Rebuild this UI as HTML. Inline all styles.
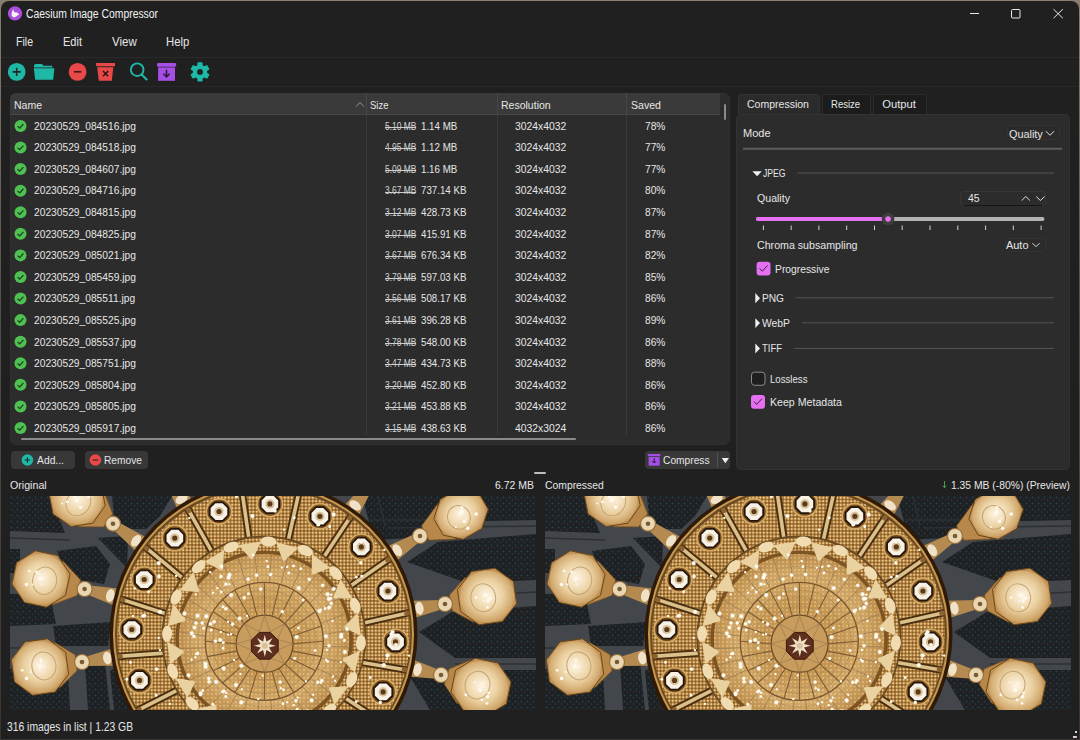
<!DOCTYPE html>
<html><head><meta charset="utf-8">
<style>
*{margin:0;padding:0;box-sizing:border-box}
html,body{width:1080px;height:740px;overflow:hidden;background:#202020}
body{position:relative;font-family:"Liberation Sans",sans-serif;color:#e6e6e6;font-size:11px}
.a{position:absolute}
.t{position:absolute;white-space:nowrap;line-height:1;transform-origin:0 0}
svg{position:absolute;overflow:visible}
</style></head><body>
<div class="a" style="left:0px;top:0px;width:1080px;height:740px;background:linear-gradient(#8a7e6e,#55504a 40%,#3a3430);"></div>
<div class="a" style="left:1px;top:1px;width:1078px;height:738px;background:#202020;border-radius:8px 8px 0 0"></div>
<div class="a" style="left:1075px;top:731px;width:2px;height:2px;background:#d8d8d8;"></div>
<div class="a" style="left:1073px;top:736px;width:2px;height:2px;background:#d8d8d8;"></div>
<div class="a" style="left:1075px;top:736px;width:2px;height:2px;background:#c8c0c8;"></div>
<svg style="left:0;top:0" width="40" height="28" viewBox="0 0 40 28">
<circle cx="15" cy="13.4" r="7.1" fill="#a94fdc"/>
<path d="M13.2 9.2 L14.3 12.2 L17.2 12.6 L19.2 14.6 L17.3 15.6 L16 16.8 L13.2 17.4 L11.6 15.2 L11.8 12.6 Z" fill="#f6f2f0"/>
</svg>
<div class="t" style="left:26.00px;top:7.84px;font-size:12px;transform:scaleX(0.8644);color:#f2f2f2;">Caesium Image Compressor</div>
<svg style="left:960px;top:0" width="120" height="28" viewBox="960 0 120 28">
<line x1="970" y1="13.5" x2="979" y2="13.5" stroke="#e8e8e8" stroke-width="1"/>
<rect x="1011.5" y="9.5" width="8.5" height="8.5" rx="1" fill="none" stroke="#e8e8e8" stroke-width="1"/>
<path d="M1053.5 9.2 L1062.8 18.2 M1062.8 9.2 L1053.5 18.2" stroke="#e8e8e8" stroke-width="1"/>
</svg>
<div class="t" style="left:16.30px;top:35.69px;font-size:12.3px;transform:scaleX(0.8578);">File</div>
<div class="t" style="left:63.00px;top:35.69px;font-size:12.3px;transform:scaleX(0.8965);">Edit</div>
<div class="t" style="left:112.00px;top:35.69px;font-size:12.3px;transform:scaleX(0.9343);">View</div>
<div class="t" style="left:165.70px;top:35.69px;font-size:12.3px;transform:scaleX(0.9211);">Help</div>
<div class="a" style="left:1px;top:57px;width:1078px;height:1px;background:#2a2a2a;"></div>
<div class="a" style="left:1px;top:86px;width:1078px;height:1px;background:#292929;"></div>
<svg style="left:0;top:56px" width="220" height="32" viewBox="0 56 220 32">
<circle cx="16.7" cy="71.9" r="8.9" fill="#1eb8a6"/>
<path d="M12.6 71.9 H20.8 M16.7 67.8 V76" stroke="#1c2b2a" stroke-width="1.6"/>
<path d="M35.5 64 L42 64 L43.5 65.8 L52.3 65.8 L52.3 67.6 L34 67.6 L34 65 Z" fill="#1eb8a6"/>
<path d="M33.8 68.2 L54.4 68.2 L53.2 79.7 L35.2 79.7 Z" fill="#1eb8a6"/>
<circle cx="77.6" cy="71.9" r="8.9" fill="#e84848"/>
<path d="M74 71.8 H81.4" stroke="#3a1c1c" stroke-width="1.6"/>
<rect x="96.1" y="63" width="18.9" height="3.3" fill="#e84848"/>
<path d="M97.2 67.3 L113.3 67.3 L111.8 80.8 L98.8 80.8 Z" fill="#e84848"/>
<path d="M103 71 L108.2 76.2 M108.2 71 L103 76.2" stroke="#2a1414" stroke-width="1.5"/>
<circle cx="137.2" cy="69.7" r="6.3" fill="none" stroke="#1eb8a6" stroke-width="1.9"/>
<path d="M141.6 74.4 L147.2 80" stroke="#1eb8a6" stroke-width="2.1"/>
<rect x="157" y="63" width="19.1" height="3.7" rx="1.2" fill="#a64fe6"/>
<rect x="158.1" y="67.4" width="16.9" height="13.4" fill="#a64fe6"/>
<path d="M166.5 69.7 V76.8 M163.4 73.8 L166.5 76.9 L169.6 73.8" fill="none" stroke="#2a1a36" stroke-width="1.5"/>
<g transform="translate(200 71.9)" fill="#1eb8a6">
<circle r="7.2"/>
<g id="tooth"><rect x="-2.6" y="-9.6" width="5.2" height="4" rx="0.8"/></g>
<use href="#tooth" transform="rotate(60)"/><use href="#tooth" transform="rotate(120)"/>
<use href="#tooth" transform="rotate(180)"/><use href="#tooth" transform="rotate(240)"/><use href="#tooth" transform="rotate(300)"/>
<circle r="2.9" fill="#202020"/>
</g>
</svg>
<div class="a" style="left:10px;top:93px;width:720px;height:351.7px;background:#2c2c2c;border-radius:6px;border:1px solid #303030"></div>
<div class="a" style="left:10px;top:93px;width:710px;height:22px;background:#3a3a3a;border-radius:6px 0 0 0"></div>
<div class="a" style="left:10px;top:114px;width:710px;height:1px;background:#464646;"></div>
<div class="a" style="left:366px;top:93px;width:1px;height:22px;background:#474747;"></div>
<div class="a" style="left:366px;top:115px;width:1px;height:320px;background:#3a3a3a;"></div>
<div class="a" style="left:497px;top:93px;width:1px;height:22px;background:#474747;"></div>
<div class="a" style="left:497px;top:115px;width:1px;height:320px;background:#3a3a3a;"></div>
<div class="a" style="left:626px;top:93px;width:1px;height:22px;background:#474747;"></div>
<div class="a" style="left:626px;top:115px;width:1px;height:320px;background:#3a3a3a;"></div>
<svg style="left:350px;top:95px" width="20" height="18" viewBox="350 95 20 18">
<path d="M356 106.5 L360 102.5 L364 106.5" fill="none" stroke="#9a9a9a" stroke-width="1"/></svg>
<div class="t" style="left:14.00px;top:100.22px;font-size:11.2px;transform:scaleX(0.9406);">Name</div>
<div class="t" style="left:370.20px;top:100.22px;font-size:11.2px;transform:scaleX(0.8491);">Size</div>
<div class="t" style="left:500.70px;top:100.22px;font-size:11.2px;transform:scaleX(0.9392);">Resolution</div>
<div class="t" style="left:630.80px;top:100.22px;font-size:11.2px;transform:scaleX(0.9447);">Saved</div>
<div class="a" style="left:724.2px;top:104px;width:1.7px;height:16px;background:#8a8a8a;border-radius:1px"></div>
<div class="a" style="left:21px;top:438.2px;width:555px;height:1.8px;background:#8a8a8a;border-radius:1px"></div>
<div class="t" style="left:33.50px;top:120.72px;font-size:11.2px;transform:scaleX(0.9150);">20230529_084516.jpg</div>
<div class="t" style="left:384.70px;top:121.73px;font-size:10px;transform:scaleX(0.8432);color:#d4d4d4;">5.10 MB</div>
<div class="a" style="left:384.7px;top:126.8px;width:31.6px;height:0.9px;background:#cfcfcf;"></div>
<div class="t" style="left:420.60px;top:120.72px;font-size:11.2px;transform:scaleX(0.8700);">1.14 MB</div>
<div class="t" style="left:514.90px;top:120.72px;font-size:11.2px;transform:scaleX(0.9256);">3024x4032</div>
<div class="t" style="left:645.00px;top:120.72px;font-size:11.2px;transform:scaleX(0.9101);">78%</div>
<div class="t" style="left:33.50px;top:142.30px;font-size:11.2px;transform:scaleX(0.9150);">20230529_084518.jpg</div>
<div class="t" style="left:384.70px;top:143.31px;font-size:10px;transform:scaleX(0.8432);color:#d4d4d4;">4.95 MB</div>
<div class="a" style="left:384.7px;top:148.38px;width:31.6px;height:0.9px;background:#cfcfcf;"></div>
<div class="t" style="left:420.60px;top:142.30px;font-size:11.2px;transform:scaleX(0.8700);">1.12 MB</div>
<div class="t" style="left:514.90px;top:142.30px;font-size:11.2px;transform:scaleX(0.9256);">3024x4032</div>
<div class="t" style="left:645.00px;top:142.30px;font-size:11.2px;transform:scaleX(0.9101);">77%</div>
<div class="t" style="left:33.50px;top:163.88px;font-size:11.2px;transform:scaleX(0.9150);">20230529_084607.jpg</div>
<div class="t" style="left:384.70px;top:164.89px;font-size:10px;transform:scaleX(0.8432);color:#d4d4d4;">5.09 MB</div>
<div class="a" style="left:384.7px;top:169.96px;width:31.6px;height:0.9px;background:#cfcfcf;"></div>
<div class="t" style="left:420.60px;top:163.88px;font-size:11.2px;transform:scaleX(0.8700);">1.16 MB</div>
<div class="t" style="left:514.90px;top:163.88px;font-size:11.2px;transform:scaleX(0.9256);">3024x4032</div>
<div class="t" style="left:645.00px;top:163.88px;font-size:11.2px;transform:scaleX(0.9101);">77%</div>
<div class="t" style="left:33.50px;top:185.46px;font-size:11.2px;transform:scaleX(0.9150);">20230529_084716.jpg</div>
<div class="t" style="left:384.70px;top:186.47px;font-size:10px;transform:scaleX(0.8432);color:#d4d4d4;">3.67 MB</div>
<div class="a" style="left:384.7px;top:191.54px;width:31.6px;height:0.9px;background:#cfcfcf;"></div>
<div class="t" style="left:420.60px;top:185.46px;font-size:11.2px;transform:scaleX(0.8700);">737.14 KB</div>
<div class="t" style="left:514.90px;top:185.46px;font-size:11.2px;transform:scaleX(0.9256);">3024x4032</div>
<div class="t" style="left:645.00px;top:185.46px;font-size:11.2px;transform:scaleX(0.9101);">80%</div>
<div class="t" style="left:33.50px;top:207.04px;font-size:11.2px;transform:scaleX(0.9150);">20230529_084815.jpg</div>
<div class="t" style="left:384.70px;top:208.05px;font-size:10px;transform:scaleX(0.8432);color:#d4d4d4;">3.12 MB</div>
<div class="a" style="left:384.7px;top:213.12px;width:31.6px;height:0.9px;background:#cfcfcf;"></div>
<div class="t" style="left:420.60px;top:207.04px;font-size:11.2px;transform:scaleX(0.8700);">428.73 KB</div>
<div class="t" style="left:514.90px;top:207.04px;font-size:11.2px;transform:scaleX(0.9256);">3024x4032</div>
<div class="t" style="left:645.00px;top:207.04px;font-size:11.2px;transform:scaleX(0.9101);">87%</div>
<div class="t" style="left:33.50px;top:228.62px;font-size:11.2px;transform:scaleX(0.9150);">20230529_084825.jpg</div>
<div class="t" style="left:384.70px;top:229.63px;font-size:10px;transform:scaleX(0.8432);color:#d4d4d4;">3.07 MB</div>
<div class="a" style="left:384.7px;top:234.7px;width:31.6px;height:0.9px;background:#cfcfcf;"></div>
<div class="t" style="left:420.60px;top:228.62px;font-size:11.2px;transform:scaleX(0.8700);">415.91 KB</div>
<div class="t" style="left:514.90px;top:228.62px;font-size:11.2px;transform:scaleX(0.9256);">3024x4032</div>
<div class="t" style="left:645.00px;top:228.62px;font-size:11.2px;transform:scaleX(0.9101);">87%</div>
<div class="t" style="left:33.50px;top:250.20px;font-size:11.2px;transform:scaleX(0.9150);">20230529_085021.jpg</div>
<div class="t" style="left:384.70px;top:251.21px;font-size:10px;transform:scaleX(0.8432);color:#d4d4d4;">3.67 MB</div>
<div class="a" style="left:384.7px;top:256.28px;width:31.6px;height:0.9px;background:#cfcfcf;"></div>
<div class="t" style="left:420.60px;top:250.20px;font-size:11.2px;transform:scaleX(0.8700);">676.34 KB</div>
<div class="t" style="left:514.90px;top:250.20px;font-size:11.2px;transform:scaleX(0.9256);">3024x4032</div>
<div class="t" style="left:645.00px;top:250.20px;font-size:11.2px;transform:scaleX(0.9101);">82%</div>
<div class="t" style="left:33.50px;top:271.78px;font-size:11.2px;transform:scaleX(0.9150);">20230529_085459.jpg</div>
<div class="t" style="left:384.70px;top:272.80px;font-size:10px;transform:scaleX(0.8432);color:#d4d4d4;">3.79 MB</div>
<div class="a" style="left:384.7px;top:277.86px;width:31.6px;height:0.9px;background:#cfcfcf;"></div>
<div class="t" style="left:420.60px;top:271.78px;font-size:11.2px;transform:scaleX(0.8700);">597.03 KB</div>
<div class="t" style="left:514.90px;top:271.78px;font-size:11.2px;transform:scaleX(0.9256);">3024x4032</div>
<div class="t" style="left:645.00px;top:271.78px;font-size:11.2px;transform:scaleX(0.9101);">85%</div>
<div class="t" style="left:33.50px;top:293.36px;font-size:11.2px;transform:scaleX(0.9150);">20230529_085511.jpg</div>
<div class="t" style="left:384.70px;top:294.38px;font-size:10px;transform:scaleX(0.8432);color:#d4d4d4;">3.56 MB</div>
<div class="a" style="left:384.7px;top:299.44px;width:31.6px;height:0.9px;background:#cfcfcf;"></div>
<div class="t" style="left:420.60px;top:293.36px;font-size:11.2px;transform:scaleX(0.8700);">508.17 KB</div>
<div class="t" style="left:514.90px;top:293.36px;font-size:11.2px;transform:scaleX(0.9256);">3024x4032</div>
<div class="t" style="left:645.00px;top:293.36px;font-size:11.2px;transform:scaleX(0.9101);">86%</div>
<div class="t" style="left:33.50px;top:314.94px;font-size:11.2px;transform:scaleX(0.9150);">20230529_085525.jpg</div>
<div class="t" style="left:384.70px;top:315.95px;font-size:10px;transform:scaleX(0.8432);color:#d4d4d4;">3.61 MB</div>
<div class="a" style="left:384.7px;top:321.02px;width:31.6px;height:0.9px;background:#cfcfcf;"></div>
<div class="t" style="left:420.60px;top:314.94px;font-size:11.2px;transform:scaleX(0.8700);">396.28 KB</div>
<div class="t" style="left:514.90px;top:314.94px;font-size:11.2px;transform:scaleX(0.9256);">3024x4032</div>
<div class="t" style="left:645.00px;top:314.94px;font-size:11.2px;transform:scaleX(0.9101);">89%</div>
<div class="t" style="left:33.50px;top:336.52px;font-size:11.2px;transform:scaleX(0.9150);">20230529_085537.jpg</div>
<div class="t" style="left:384.70px;top:337.54px;font-size:10px;transform:scaleX(0.8432);color:#d4d4d4;">3.78 MB</div>
<div class="a" style="left:384.7px;top:342.6px;width:31.6px;height:0.9px;background:#cfcfcf;"></div>
<div class="t" style="left:420.60px;top:336.52px;font-size:11.2px;transform:scaleX(0.8700);">548.00 KB</div>
<div class="t" style="left:514.90px;top:336.52px;font-size:11.2px;transform:scaleX(0.9256);">3024x4032</div>
<div class="t" style="left:645.00px;top:336.52px;font-size:11.2px;transform:scaleX(0.9101);">86%</div>
<div class="t" style="left:33.50px;top:358.10px;font-size:11.2px;transform:scaleX(0.9150);">20230529_085751.jpg</div>
<div class="t" style="left:384.70px;top:359.12px;font-size:10px;transform:scaleX(0.8432);color:#d4d4d4;">3.47 MB</div>
<div class="a" style="left:384.7px;top:364.18px;width:31.6px;height:0.9px;background:#cfcfcf;"></div>
<div class="t" style="left:420.60px;top:358.10px;font-size:11.2px;transform:scaleX(0.8700);">434.73 KB</div>
<div class="t" style="left:514.90px;top:358.10px;font-size:11.2px;transform:scaleX(0.9256);">3024x4032</div>
<div class="t" style="left:645.00px;top:358.10px;font-size:11.2px;transform:scaleX(0.9101);">88%</div>
<div class="t" style="left:33.50px;top:379.68px;font-size:11.2px;transform:scaleX(0.9150);">20230529_085804.jpg</div>
<div class="t" style="left:384.70px;top:380.69px;font-size:10px;transform:scaleX(0.8432);color:#d4d4d4;">3.20 MB</div>
<div class="a" style="left:384.7px;top:385.76px;width:31.6px;height:0.9px;background:#cfcfcf;"></div>
<div class="t" style="left:420.60px;top:379.68px;font-size:11.2px;transform:scaleX(0.8700);">452.80 KB</div>
<div class="t" style="left:514.90px;top:379.68px;font-size:11.2px;transform:scaleX(0.9256);">3024x4032</div>
<div class="t" style="left:645.00px;top:379.68px;font-size:11.2px;transform:scaleX(0.9101);">86%</div>
<div class="t" style="left:33.50px;top:401.26px;font-size:11.2px;transform:scaleX(0.9150);">20230529_085805.jpg</div>
<div class="t" style="left:384.70px;top:402.27px;font-size:10px;transform:scaleX(0.8432);color:#d4d4d4;">3.21 MB</div>
<div class="a" style="left:384.7px;top:407.34px;width:31.6px;height:0.9px;background:#cfcfcf;"></div>
<div class="t" style="left:420.60px;top:401.26px;font-size:11.2px;transform:scaleX(0.8700);">453.88 KB</div>
<div class="t" style="left:514.90px;top:401.26px;font-size:11.2px;transform:scaleX(0.9256);">3024x4032</div>
<div class="t" style="left:645.00px;top:401.26px;font-size:11.2px;transform:scaleX(0.9101);">86%</div>
<div class="t" style="left:33.50px;top:422.84px;font-size:11.2px;transform:scaleX(0.9150);">20230529_085917.jpg</div>
<div class="t" style="left:384.70px;top:423.86px;font-size:10px;transform:scaleX(0.8432);color:#d4d4d4;">3.15 MB</div>
<div class="a" style="left:384.7px;top:428.92px;width:31.6px;height:0.9px;background:#cfcfcf;"></div>
<div class="t" style="left:420.60px;top:422.84px;font-size:11.2px;transform:scaleX(0.8700);">438.63 KB</div>
<div class="t" style="left:514.90px;top:422.84px;font-size:11.2px;transform:scaleX(0.9256);">4032x3024</div>
<div class="t" style="left:645.00px;top:422.84px;font-size:11.2px;transform:scaleX(0.9101);">86%</div>
<svg style="left:0;top:0" width="40" height="440" viewBox="0 0 40 440"><circle cx="20.5" cy="125.90" r="6" fill="#4fc153"/><path d="M17.6 126.10 L19.7 128.10 L23.4 124.00" fill="none" stroke="#1d3a1e" stroke-width="1.2"/><circle cx="20.5" cy="147.48" r="6" fill="#4fc153"/><path d="M17.6 147.68 L19.7 149.68 L23.4 145.58" fill="none" stroke="#1d3a1e" stroke-width="1.2"/><circle cx="20.5" cy="169.06" r="6" fill="#4fc153"/><path d="M17.6 169.26 L19.7 171.26 L23.4 167.16" fill="none" stroke="#1d3a1e" stroke-width="1.2"/><circle cx="20.5" cy="190.64" r="6" fill="#4fc153"/><path d="M17.6 190.84 L19.7 192.84 L23.4 188.74" fill="none" stroke="#1d3a1e" stroke-width="1.2"/><circle cx="20.5" cy="212.22" r="6" fill="#4fc153"/><path d="M17.6 212.42 L19.7 214.42 L23.4 210.32" fill="none" stroke="#1d3a1e" stroke-width="1.2"/><circle cx="20.5" cy="233.80" r="6" fill="#4fc153"/><path d="M17.6 234.00 L19.7 236.00 L23.4 231.90" fill="none" stroke="#1d3a1e" stroke-width="1.2"/><circle cx="20.5" cy="255.38" r="6" fill="#4fc153"/><path d="M17.6 255.58 L19.7 257.58 L23.4 253.48" fill="none" stroke="#1d3a1e" stroke-width="1.2"/><circle cx="20.5" cy="276.96" r="6" fill="#4fc153"/><path d="M17.6 277.16 L19.7 279.16 L23.4 275.06" fill="none" stroke="#1d3a1e" stroke-width="1.2"/><circle cx="20.5" cy="298.54" r="6" fill="#4fc153"/><path d="M17.6 298.74 L19.7 300.74 L23.4 296.64" fill="none" stroke="#1d3a1e" stroke-width="1.2"/><circle cx="20.5" cy="320.12" r="6" fill="#4fc153"/><path d="M17.6 320.32 L19.7 322.32 L23.4 318.22" fill="none" stroke="#1d3a1e" stroke-width="1.2"/><circle cx="20.5" cy="341.70" r="6" fill="#4fc153"/><path d="M17.6 341.90 L19.7 343.90 L23.4 339.80" fill="none" stroke="#1d3a1e" stroke-width="1.2"/><circle cx="20.5" cy="363.28" r="6" fill="#4fc153"/><path d="M17.6 363.48 L19.7 365.48 L23.4 361.38" fill="none" stroke="#1d3a1e" stroke-width="1.2"/><circle cx="20.5" cy="384.86" r="6" fill="#4fc153"/><path d="M17.6 385.06 L19.7 387.06 L23.4 382.96" fill="none" stroke="#1d3a1e" stroke-width="1.2"/><circle cx="20.5" cy="406.44" r="6" fill="#4fc153"/><path d="M17.6 406.64 L19.7 408.64 L23.4 404.54" fill="none" stroke="#1d3a1e" stroke-width="1.2"/><circle cx="20.5" cy="428.02" r="6" fill="#4fc153"/><path d="M17.6 428.22 L19.7 430.22 L23.4 426.12" fill="none" stroke="#1d3a1e" stroke-width="1.2"/></svg>
<div class="a" style="left:11px;top:451px;width:64px;height:18px;background:#383838;border-radius:4px"></div>
<div class="a" style="left:85px;top:451px;width:63px;height:18px;background:#383838;border-radius:4px"></div>
<div class="a" style="left:645px;top:451px;width:85px;height:18px;background:#383838;border-radius:4px"></div>
<div class="a" style="left:717px;top:453px;width:1px;height:14px;background:#555;"></div>
<svg style="left:0;top:440px" width="740" height="40" viewBox="0 440 740 40">
<circle cx="27.4" cy="460" r="5.8" fill="#1eb8a6"/><path d="M24.6 460 H30.2 M27.4 457.2 V462.8" stroke="#1c2b2a" stroke-width="1.1"/>
<circle cx="95.4" cy="460" r="5.8" fill="#e84848"/><path d="M92.6 460 H98.2" stroke="#3a1c1c" stroke-width="1.1"/>
<rect x="647.9" y="454" width="12.5" height="2.2" fill="#a64fe6"/>
<rect x="648.6" y="457" width="11.1" height="8.7" fill="#a64fe6"/>
<path d="M654.2 458.3 V463 M652.3 461.2 L654.2 463.1 L656.1 461.2" fill="none" stroke="#2a1a36" stroke-width="1"/>
<path d="M721.8 458 L728.9 458 L725.35 463.3 Z" fill="#f0f0f0"/>
</svg>
<div class="t" style="left:36.70px;top:454.82px;font-size:11.2px;transform:scaleX(0.9227);">Add...</div>
<div class="t" style="left:104.00px;top:454.82px;font-size:11.2px;transform:scaleX(0.9112);">Remove</div>
<div class="t" style="left:663.40px;top:454.82px;font-size:11.2px;transform:scaleX(0.9132);">Compress</div>
<div class="a" style="left:534px;top:472px;width:12px;height:2px;background:#bdbdbd;border-radius:1px"></div>
<div class="a" style="left:737.6px;top:94.2px;width:82px;height:20px;background:#2b2b2b;border-radius:4px 4px 0 0;border:1px solid #333;border-bottom:none"></div>
<div class="a" style="left:822.4px;top:94.2px;width:48.2px;height:19.5px;background:#1c1c1c;border-radius:4px 4px 0 0;border:1px solid #2c2c2c;border-bottom:none"></div>
<div class="a" style="left:873.3px;top:94.2px;width:53.4px;height:19.5px;background:#1c1c1c;border-radius:4px 4px 0 0;border:1px solid #2c2c2c;border-bottom:none"></div>
<div class="a" style="left:736px;top:113.5px;width:334px;height:356.8px;background:#2c2c2c;border-radius:5px;border:1px solid #333"></div>
<div class="t" style="left:747.00px;top:98.72px;font-size:11.2px;transform:scaleX(0.9397);">Compression</div>
<div class="t" style="left:831.30px;top:98.72px;font-size:11.2px;transform:scaleX(0.8530);">Resize</div>
<div class="t" style="left:882.30px;top:98.72px;font-size:11.2px;">Output</div>
<div class="t" style="left:743.30px;top:128.32px;font-size:11.2px;transform:scaleX(0.9852);">Mode</div>
<div class="a" style="left:1006.8px;top:125px;width:53px;height:15px;background:#2b2b2b;border-radius:3px;border:1px solid #333"></div>
<div class="t" style="left:1008.50px;top:128.62px;font-size:11.2px;transform:scaleX(0.9697);">Quality</div>
<svg style="left:730px;top:110px" width="350" height="310" viewBox="730 110 350 310">
<path d="M1045.8 131.2 L1050 135.2 L1054.2 131.2" fill="none" stroke="#e0e0e0" stroke-width="1"/>
<line x1="743" y1="148.8" x2="1062" y2="148.8" stroke="#5c5c5c" stroke-width="2"/>
<path d="M752.4 171.2 L761.8 171.2 L757.1 176.2 Z" fill="#f0f0f0"/>
<line x1="797.4" y1="173" x2="1054" y2="173" stroke="#555" stroke-width="1"/>
<line x1="795.5" y1="297.8" x2="1054" y2="297.8" stroke="#555" stroke-width="1"/>
<line x1="802" y1="322.8" x2="1054" y2="322.8" stroke="#555" stroke-width="1"/>
<line x1="793.8" y1="348.4" x2="1054" y2="348.4" stroke="#555" stroke-width="1"/>
<path d="M755.3 293 L760 298.2 L755.3 303.3 Z" fill="#f0f0f0"/>
<path d="M755.3 318.2 L760 323.1 L755.3 328 Z" fill="#f0f0f0"/>
<path d="M755.3 343.4 L760 348.4 L755.3 353.4 Z" fill="#f0f0f0"/>
</svg>
<div class="t" style="left:762.80px;top:167.82px;font-size:11.2px;transform:scaleX(0.7726);">JPEG</div>
<div class="t" style="left:756.60px;top:192.52px;font-size:11.2px;transform:scaleX(0.9467);">Quality</div>
<div class="a" style="left:960px;top:191px;width:86px;height:15px;background:#2c2c2c;border-radius:4px;border:1px solid #363636"></div>
<div class="a" style="left:964px;top:204.5px;width:78px;height:1px;background:#151515;"></div>
<div class="t" style="left:968.20px;top:192.52px;font-size:11.2px;transform:scaleX(0.9393);">45</div>
<svg style="left:730px;top:180px" width="350" height="110" viewBox="730 180 350 110">
<path d="M1021.7 200.5 L1025.8 196.5 L1029.9 200.5" fill="none" stroke="#e0e0e0" stroke-width="1"/>
<path d="M1036.2 196.5 L1040.4 200.5 L1044.6 196.5" fill="none" stroke="#e0e0e0" stroke-width="1"/>
<line x1="758" y1="219" x2="1042.5" y2="219" stroke="#b4b4b4" stroke-width="4" stroke-linecap="round"/>
<line x1="758" y1="219" x2="888" y2="219" stroke="#e46ff0" stroke-width="4" stroke-linecap="round"/>
<circle cx="888.1" cy="219" r="6.3" fill="#3e3e3e"/>
<circle cx="888.1" cy="219" r="2.8" fill="#e46ff0"/>
<line x1="763.4" y1="225.5" x2="763.4" y2="230" stroke="#cfcfcf" stroke-width="1"/><line x1="791.2" y1="225.5" x2="791.2" y2="230" stroke="#cfcfcf" stroke-width="1"/><line x1="818.9" y1="225.5" x2="818.9" y2="230" stroke="#cfcfcf" stroke-width="1"/><line x1="846.7" y1="225.5" x2="846.7" y2="230" stroke="#cfcfcf" stroke-width="1"/><line x1="874.5" y1="225.5" x2="874.5" y2="230" stroke="#cfcfcf" stroke-width="1"/><line x1="902.2" y1="225.5" x2="902.2" y2="230" stroke="#cfcfcf" stroke-width="1"/><line x1="930.0" y1="225.5" x2="930.0" y2="230" stroke="#cfcfcf" stroke-width="1"/><line x1="957.8" y1="225.5" x2="957.8" y2="230" stroke="#cfcfcf" stroke-width="1"/><line x1="985.6" y1="225.5" x2="985.6" y2="230" stroke="#cfcfcf" stroke-width="1"/><line x1="1013.3" y1="225.5" x2="1013.3" y2="230" stroke="#cfcfcf" stroke-width="1"/><line x1="1041.1" y1="225.5" x2="1041.1" y2="230" stroke="#cfcfcf" stroke-width="1"/>
<rect x="756.6" y="261.8" width="13.9" height="13.6" rx="3" fill="#e46ff0"/>
<path d="M759.6 268.4 L762.3 271.2 L767.5 265.5" fill="none" stroke="#3a1f3d" stroke-width="1"/>
</svg>
<div class="a" style="left:1004.8px;top:238.4px;width:41.2px;height:13.6px;background:#2b2b2b;border-radius:3px;border:1px solid #333"></div>
<svg style="left:1028px;top:238px" width="20" height="14" viewBox="1028 238 20 14"><path d="M1032.5 243.2 L1036 246.7 L1039.5 243.2" fill="none" stroke="#e0e0e0" stroke-width="1"/></svg>
<div class="t" style="left:756.60px;top:239.82px;font-size:11.2px;transform:scaleX(0.9507);">Chroma subsampling</div>
<div class="t" style="left:1005.80px;top:239.82px;font-size:11.2px;transform:scaleX(0.9766);">Auto</div>
<div class="t" style="left:775.40px;top:264.02px;font-size:11.2px;transform:scaleX(0.9217);">Progressive</div>
<div class="t" style="left:762.40px;top:292.72px;font-size:11.2px;transform:scaleX(0.9064);">PNG</div>
<div class="t" style="left:762.40px;top:317.72px;font-size:11.2px;transform:scaleX(0.9242);">WebP</div>
<div class="t" style="left:762.40px;top:343.12px;font-size:11.2px;transform:scaleX(0.8462);">TIFF</div>
<svg style="left:740px;top:360px" width="40" height="60" viewBox="740 360 40 60">
<rect x="751.5" y="372.2" width="13.5" height="13.1" rx="3" fill="#1e1e1e" stroke="#8a8a8a" stroke-width="1"/>
<rect x="751" y="395" width="14" height="13.7" rx="3" fill="#e46ff0"/>
<path d="M754 401.6 L756.7 404.4 L761.9 398.7" fill="none" stroke="#3a1f3d" stroke-width="1"/>
</svg>
<div class="t" style="left:769.90px;top:373.72px;font-size:11.2px;transform:scaleX(0.8606);">Lossless</div>
<div class="t" style="left:769.90px;top:397.02px;font-size:11.2px;transform:scaleX(0.9479);">Keep Metadata</div>
<div class="t" style="left:10.00px;top:479.52px;font-size:11.2px;transform:scaleX(0.9510);">Original</div>
<div class="t" style="left:495.00px;top:479.52px;font-size:11.2px;transform:scaleX(0.9351);">6.72 MB</div>
<div class="t" style="left:545.00px;top:479.52px;font-size:11.2px;transform:scaleX(0.9262);">Compressed</div>
<svg style="left:940px;top:478px" width="12" height="14" viewBox="940 478 12 14">
<path d="M944.5 481 V487.6 M942.9 485.8 L944.5 487.7 L946.1 485.8" fill="none" stroke="#3fae4f" stroke-width="0.9"/></svg>
<div class="t" style="left:951.00px;top:479.52px;font-size:11.2px;transform:scaleX(0.9237);">1.35 MB (-80%) (Preview)</div>
<svg style="left:10px;top:496px" width="526" height="214" viewBox="0 0 526 214"><defs>
<radialGradient id="lampg" cx="50%" cy="48%" r="55%"><stop offset="0" stop-color="#fff6e6"/><stop offset="0.55" stop-color="#ead0a0"/><stop offset="1" stop-color="#c89a5c"/></radialGradient>
<radialGradient id="dome" cx="50%" cy="50%" r="50%"><stop offset="0" stop-color="#d4a868"/><stop offset="0.4" stop-color="#c4944e"/><stop offset="0.75" stop-color="#d2a866"/><stop offset="1" stop-color="#bf8e4a"/></radialGradient>
<pattern id="dometex" width="4" height="4" patternUnits="userSpaceOnUse"><circle cx="2" cy="2" r="0.9" fill="#f2d8a8" opacity="0.6"/></pattern>
<pattern id="bandtex" width="3.5" height="3.5" patternUnits="userSpaceOnUse"><rect width="3.5" height="3.5" fill="#8a5a20"/><circle cx="1.75" cy="1.75" r="1.3" fill="#ecc888"/></pattern>
<pattern id="darktex" width="6" height="6" patternUnits="userSpaceOnUse"><rect width="6" height="6" fill="#1b2125"/><circle cx="1.5" cy="1.5" r="1" fill="#2f3a3f"/><circle cx="4.5" cy="4" r="0.9" fill="#3a2e26"/></pattern>
<radialGradient id="spark"><stop offset="0" stop-color="#ffffff"/><stop offset="0.45" stop-color="#fffcf2"/><stop offset="1" stop-color="#fff6e0" stop-opacity="0"/></radialGradient>
<clipPath id="imgclip"><rect width="526" height="214"/></clipPath>
</defs><g id="chand" clip-path="url(#imgclip)"><rect width="526" height="214" fill="#43464b"/><polygon points="0,0 40,0 55,37 0,35" fill="url(#darktex)"/><polygon points="0,53 10,53 10,77 0,77" fill="url(#darktex)"/><polygon points="47,55 86,50 100,68 94,88 58,82" fill="url(#darktex)"/><polygon points="88,42 118,40 117,72" fill="url(#darktex)"/><polygon points="102,0 162,0 150,20 136,33 116,33 104,20" fill="url(#darktex)"/><polygon points="0,98 40,98 46,128 0,130" fill="url(#darktex)"/><polygon points="43,130 101,126 98,150 46,150" fill="url(#darktex)"/><polygon points="0,173 58,176 60,214 0,214" fill="url(#darktex)"/><polygon points="75,168 95,166 100,214 78,214" fill="url(#darktex)"/><polygon points="100,175 112,168 120,214 104,214" fill="url(#darktex)"/><polygon points="352,0 526,0 526,24 440,26 400,42 364,44" fill="url(#darktex)"/><polygon points="397,66 428,46 526,38 526,84 457,87" fill="url(#darktex)"/><polygon points="409,136 442,116 526,110 526,162 445,162" fill="url(#darktex)"/><polygon points="399,179 430,174 526,174 526,214 420,214" fill="url(#darktex)"/><polygon points="345,0 365,0 360,10" fill="url(#darktex)"/><line x1="0" y1="42" x2="60" y2="44" stroke="#2c3034" stroke-width="1.5"/><line x1="378" y1="32" x2="526" y2="30" stroke="#2c3034" stroke-width="1.5"/><line x1="457" y1="100" x2="526" y2="96" stroke="#2c3034" stroke-width="1.5"/><line x1="445" y1="168" x2="526" y2="168" stroke="#2c3034" stroke-width="1.5"/><line x1="20" y1="92" x2="45" y2="95" stroke="#2c3034" stroke-width="1.5"/><line x1="0" y1="152" x2="45" y2="152" stroke="#2c3034" stroke-width="1.5"/><line x1="368" y1="0" x2="375" y2="30" stroke="#2c3034" stroke-width="1.5"/><line x1="360" y1="24" x2="420" y2="24" stroke="#2c3034" stroke-width="1.5"/><polygon points="105.4,24.5 137.9,42.2 127.3,56.7 100.6,30.9" fill="#b48a50"/><ellipse cx="126.1" cy="44.7" rx="6.5" ry="4.2" transform="rotate(-53.7 126.1 44.7)" fill="#f0e2c8"/><polygon points="75.6,89.1 110.3,92.7 105.9,110.2 73.6,96.9" fill="#b48a50"/><ellipse cx="100.3" cy="99.5" rx="6.5" ry="4.2" transform="rotate(-75.8 100.3 99.5)" fill="#f0e2c8"/><polygon points="71.4,162.0 103.9,152.0 106.6,169.8 72.6,170.0" fill="#b48a50"/><ellipse cx="97.3" cy="162.1" rx="6.5" ry="4.2" transform="rotate(261.3 97.3 162.1)" fill="#f0e2c8"/><polygon points="412.1,43.4 385.3,66.1 375.8,50.9 407.9,36.6" fill="#b48a50"/><ellipse cx="387.3" cy="54.2" rx="6.5" ry="4.2" transform="rotate(57.9 387.3 54.2)" fill="#f0e2c8"/><polygon points="435.7,111.9 402.9,122.5 400.0,104.7 434.3,104.1" fill="#b48a50"/><ellipse cx="409.4" cy="112.3" rx="6.5" ry="4.2" transform="rotate(80.6 409.4 112.3)" fill="#f0e2c8"/><polygon points="430.1,182.9 397.7,180.6 401.7,163.0 431.9,175.1" fill="#b48a50"/><ellipse cx="407.5" cy="173.6" rx="6.5" ry="4.2" transform="rotate(102.9 407.5 173.6)" fill="#f0e2c8"/><polygon points="160.4,-23.1 183.4,5.3 168.0,14.6 153.6,-18.9" fill="#b48a50"/><ellipse cx="171.6" cy="3.1" rx="6.5" ry="4.2" transform="rotate(-31.2 171.6 3.1)" fill="#f0e2c8"/><polygon points="364.3,-10.7 347.8,21.2 333.1,10.7 357.7,-15.3" fill="#b48a50"/><ellipse cx="345.1" cy="9.4" rx="6.5" ry="4.2" transform="rotate(35.4 345.1 9.4)" fill="#f0e2c8"/><polygon points="68.3,30.8 93.5,30.9 102.6,17.7 93.4,-5.8" fill="#b8884a" stroke="#7a5220" stroke-width="0.8"/><polygon points="82.9,27.2 61.2,30.6 43.0,17.9 38.8,-3.6 51.1,-21.2 72.8,-24.6 91.0,-11.9 95.2,9.6" fill="#c09458" stroke="#6e4614" stroke-width="1"/><ellipse cx="67.0" cy="3.0" rx="25.8" ry="24.8" transform="rotate(35 67.0 3.0)" fill="url(#lampg)"/><ellipse cx="70.3" cy="5.3" rx="11.8" ry="13.5" transform="rotate(35 67.0 3.0)" fill="none" stroke="#c6a273" stroke-width="1"/><circle cx="57.3" cy="5.9" r="1.4" fill="#fffaf0"/><circle cx="52.1" cy="7.5" r="1" fill="#fffaf0"/><circle cx="70.7" cy="11.2" r="1.8" fill="#fffaf0"/><circle cx="64.4" cy="0.9" r="1.4" fill="#fffaf0"/><circle cx="66.5" cy="4.5" r="1.8" fill="#fffaf0"/><circle cx="59.8" cy="-4.8" r="1.4" fill="#fffaf0"/><circle cx="78.6" cy="0.5" r="1.8" fill="#fffaf0"/><circle cx="60.3" cy="-5.9" r="1.8" fill="#fffaf0"/><polygon points="42.6,108.8 67.0,99.5 70.5,83.9 52.7,64.8" fill="#b8884a" stroke="#7a5220" stroke-width="0.8"/><polygon points="55.5,99.4 36.6,111.2 14.4,106.5 1.9,88.0 6.5,66.6 25.4,54.8 47.6,59.5 60.1,78.0" fill="#c09458" stroke="#6e4614" stroke-width="1"/><ellipse cx="31.0" cy="83.0" rx="26.2" ry="25.3" transform="rotate(12 31.0 83.0)" fill="url(#lampg)"/><ellipse cx="34.9" cy="83.9" rx="12.0" ry="13.8" transform="rotate(12 31.0 83.0)" fill="none" stroke="#c6a273" stroke-width="1"/><circle cx="31.6" cy="83.2" r="1" fill="#fffaf0"/><circle cx="19.3" cy="74.9" r="1.4" fill="#fffaf0"/><circle cx="16.5" cy="88.5" r="1.8" fill="#fffaf0"/><circle cx="31.6" cy="88.2" r="1" fill="#fffaf0"/><circle cx="26.6" cy="76.0" r="1.4" fill="#fffaf0"/><circle cx="22.5" cy="88.4" r="1" fill="#fffaf0"/><circle cx="29.5" cy="77.6" r="1" fill="#fffaf0"/><circle cx="30.5" cy="83.0" r="1.8" fill="#fffaf0"/><polygon points="49.7,191.8 67.0,174.7 65.1,158.8 44.3,146.2" fill="#b8884a" stroke="#7a5220" stroke-width="0.8"/><polygon points="58.7,178.2 45.0,196.1 22.5,199.2 4.4,185.8 1.3,163.8 15.0,145.9 37.5,142.8 55.6,156.2" fill="#c09458" stroke="#6e4614" stroke-width="1"/><ellipse cx="30.0" cy="171.0" rx="26.2" ry="25.8" transform="rotate(-8 30.0 171.0)" fill="url(#lampg)"/><ellipse cx="34.0" cy="170.5" rx="12.0" ry="14.0" transform="rotate(-8 30.0 171.0)" fill="none" stroke="#c6a273" stroke-width="1"/><circle cx="30.8" cy="163.8" r="1.4" fill="#fffaf0"/><circle cx="16.6" cy="182.4" r="1.8" fill="#fffaf0"/><circle cx="33.9" cy="171.0" r="1" fill="#fffaf0"/><circle cx="12.2" cy="174.3" r="1.4" fill="#fffaf0"/><circle cx="20.8" cy="176.0" r="1" fill="#fffaf0"/><circle cx="30.9" cy="166.2" r="1" fill="#fffaf0"/><circle cx="29.9" cy="171.3" r="1.4" fill="#fffaf0"/><circle cx="30.1" cy="168.9" r="1" fill="#fffaf0"/><polygon points="427.4,8.3 411.5,30.1 419.1,44.2 446.0,43.0" fill="#b8884a" stroke="#7a5220" stroke-width="0.8"/><polygon points="478.2,13.3 471.8,32.6 453.2,43.3 433.3,39.2 423.8,22.7 430.2,3.4 448.8,-7.3 468.7,-3.2" fill="#c09458" stroke="#6e4614" stroke-width="1"/><ellipse cx="451.0" cy="18.0" rx="24.8" ry="22.1" transform="rotate(-30 451.0 18.0)" fill="url(#lampg)"/><ellipse cx="447.5" cy="19.9" rx="11.3" ry="12.0" transform="rotate(-30 451.0 18.0)" fill="none" stroke="#c6a273" stroke-width="1"/><circle cx="450.9" cy="17.8" r="1.4" fill="#fffaf0"/><circle cx="451.9" cy="15.3" r="1.8" fill="#fffaf0"/><circle cx="454.4" cy="25.4" r="1.8" fill="#fffaf0"/><circle cx="451.9" cy="11.5" r="1.4" fill="#fffaf0"/><circle cx="456.5" cy="22.4" r="1" fill="#fffaf0"/><circle cx="466.2" cy="18.0" r="1.8" fill="#fffaf0"/><circle cx="445.8" cy="31.0" r="1" fill="#fffaf0"/><circle cx="457.7" cy="32.3" r="1.8" fill="#fffaf0"/><polygon points="455.5,81.0 439.5,99.1 442.3,114.8 463.6,126.2" fill="#b8884a" stroke="#7a5220" stroke-width="0.8"/><polygon points="506.6,107.6 492.4,125.5 469.1,128.8 450.5,115.5 447.4,93.4 461.6,75.5 484.9,72.2 503.5,85.5" fill="#c09458" stroke="#6e4614" stroke-width="1"/><ellipse cx="477.0" cy="100.5" rx="27.1" ry="25.8" transform="rotate(-8 477.0 100.5)" fill="url(#lampg)"/><ellipse cx="473.1" cy="101.2" rx="12.4" ry="14.0" transform="rotate(-8 477.0 100.5)" fill="none" stroke="#c6a273" stroke-width="1"/><circle cx="475.8" cy="99.1" r="1" fill="#fffaf0"/><circle cx="478.1" cy="105.1" r="1.8" fill="#fffaf0"/><circle cx="474.3" cy="105.2" r="1" fill="#fffaf0"/><circle cx="480.6" cy="102.2" r="1.8" fill="#fffaf0"/><circle cx="477.5" cy="111.4" r="1.4" fill="#fffaf0"/><circle cx="475.2" cy="98.9" r="1.8" fill="#fffaf0"/><circle cx="466.0" cy="101.6" r="1.4" fill="#fffaf0"/><circle cx="478.2" cy="103.1" r="1" fill="#fffaf0"/><polygon points="460.6,163.9 439.0,173.1 434.4,188.4 447.4,207.9" fill="#b8884a" stroke="#7a5220" stroke-width="0.8"/><polygon points="496.4,207.8 476.9,219.8 453.9,214.9 441.0,196.0 445.6,174.2 465.1,162.2 488.1,167.1 501.0,186.0" fill="#c09458" stroke="#6e4614" stroke-width="1"/><ellipse cx="471.0" cy="191.0" rx="27.1" ry="25.8" transform="rotate(12 471.0 191.0)" fill="url(#lampg)"/><ellipse cx="467.2" cy="189.9" rx="12.4" ry="14.0" transform="rotate(12 471.0 191.0)" fill="none" stroke="#c6a273" stroke-width="1"/><circle cx="473.0" cy="186.9" r="1" fill="#fffaf0"/><circle cx="477.6" cy="200.6" r="1.8" fill="#fffaf0"/><circle cx="477.0" cy="207.3" r="1.4" fill="#fffaf0"/><circle cx="464.6" cy="186.4" r="1" fill="#fffaf0"/><circle cx="478.6" cy="196.9" r="1.4" fill="#fffaf0"/><circle cx="472.0" cy="203.8" r="1.4" fill="#fffaf0"/><circle cx="455.8" cy="198.9" r="1.4" fill="#fffaf0"/><circle cx="470.1" cy="194.1" r="1.8" fill="#fffaf0"/><polygon points="129.6,-30.1 147.0,-21.7 160.5,-30.4 159.9,-49.7" fill="#b8884a" stroke="#7a5220" stroke-width="0.8"/><polygon points="141.8,-25.7 122.7,-34.1 110.7,-54.8 113.0,-75.6 128.2,-84.3 147.3,-75.9 159.3,-55.2 157.0,-34.4" fill="#c09458" stroke="#6e4614" stroke-width="1"/><ellipse cx="135.0" cy="-55.0" rx="27.6" ry="20.2" transform="rotate(60 135.0 -55.0)" fill="url(#lampg)"/><ellipse cx="137.2" cy="-51.6" rx="12.6" ry="11.0" transform="rotate(60 135.0 -55.0)" fill="none" stroke="#c6a273" stroke-width="1"/><circle cx="137.4" cy="-55.3" r="1.4" fill="#fffaf0"/><circle cx="119.5" cy="-59.4" r="1.8" fill="#fffaf0"/><circle cx="138.7" cy="-53.6" r="1" fill="#fffaf0"/><circle cx="135.0" cy="-56.0" r="1.4" fill="#fffaf0"/><circle cx="133.9" cy="-54.7" r="1" fill="#fffaf0"/><circle cx="132.9" cy="-47.6" r="1" fill="#fffaf0"/><circle cx="137.3" cy="-53.9" r="1.4" fill="#fffaf0"/><circle cx="147.7" cy="-56.1" r="1.8" fill="#fffaf0"/><polygon points="359.9,-43.4 357.8,-22.5 371.0,-13.4 389.7,-23.0" fill="#b8884a" stroke="#7a5220" stroke-width="0.8"/><polygon points="407.0,-68.6 409.3,-47.8 397.3,-27.1 378.2,-18.7 363.0,-27.4 360.7,-48.2 372.7,-68.9 391.8,-77.3" fill="#c09458" stroke="#6e4614" stroke-width="1"/><ellipse cx="385.0" cy="-48.0" rx="27.6" ry="20.2" transform="rotate(-60 385.0 -48.0)" fill="url(#lampg)"/><ellipse cx="382.7" cy="-44.7" rx="12.6" ry="11.0" transform="rotate(-60 385.0 -48.0)" fill="none" stroke="#c6a273" stroke-width="1"/><circle cx="366.7" cy="-49.9" r="1.8" fill="#fffaf0"/><circle cx="385.3" cy="-47.9" r="1.4" fill="#fffaf0"/><circle cx="379.3" cy="-61.1" r="1" fill="#fffaf0"/><circle cx="383.8" cy="-48.6" r="1" fill="#fffaf0"/><circle cx="384.2" cy="-52.5" r="1" fill="#fffaf0"/><circle cx="394.5" cy="-44.4" r="1.8" fill="#fffaf0"/><circle cx="402.5" cy="-44.3" r="1.8" fill="#fffaf0"/><circle cx="380.6" cy="-58.9" r="1.4" fill="#fffaf0"/><circle cx="103.0" cy="27.7" r="7.5" fill="#e9d6b2" stroke="#9a7038" stroke-width="1.2"/><circle cx="103.0" cy="27.7" r="2.3" fill="#7a5a30"/><circle cx="74.6" cy="93.0" r="7.5" fill="#e9d6b2" stroke="#9a7038" stroke-width="1.2"/><circle cx="74.6" cy="93.0" r="2.3" fill="#7a5a30"/><circle cx="72.0" cy="166.0" r="7.5" fill="#e9d6b2" stroke="#9a7038" stroke-width="1.2"/><circle cx="72.0" cy="166.0" r="2.3" fill="#7a5a30"/><circle cx="410.0" cy="40.0" r="7.5" fill="#e9d6b2" stroke="#9a7038" stroke-width="1.2"/><circle cx="410.0" cy="40.0" r="2.3" fill="#7a5a30"/><circle cx="435.0" cy="108.0" r="7.5" fill="#e9d6b2" stroke="#9a7038" stroke-width="1.2"/><circle cx="435.0" cy="108.0" r="2.3" fill="#7a5a30"/><circle cx="431.0" cy="179.0" r="7.5" fill="#e9d6b2" stroke="#9a7038" stroke-width="1.2"/><circle cx="431.0" cy="179.0" r="2.3" fill="#7a5a30"/><circle cx="157.0" cy="-21.0" r="7.5" fill="#e9d6b2" stroke="#9a7038" stroke-width="1.2"/><circle cx="157.0" cy="-21.0" r="2.3" fill="#7a5a30"/><circle cx="361.0" cy="-13.0" r="7.5" fill="#e9d6b2" stroke="#9a7038" stroke-width="1.2"/><circle cx="361.0" cy="-13.0" r="2.3" fill="#7a5a30"/><circle cx="253.5" cy="138.2" r="154" fill="#2e1a06"/><circle cx="253.5" cy="138.2" r="150.5" fill="#c8984e"/><circle cx="253.5" cy="138.2" r="148.5" fill="#6a4a22"/><circle cx="253.6" cy="138.7" r="146.5" fill="url(#bandtex)"/><line x1="278.3" y1="44.1" x2="289.0" y2="-4.1" stroke="#4a2e10" stroke-width="7.5"/><line x1="278.3" y1="44.1" x2="289.0" y2="-4.1" stroke="#dcc08a" stroke-width="3.6"/><circle cx="288.5" cy="-2.0" r="2.6" fill="#8a6230"/><line x1="313.9" y1="60.9" x2="340.9" y2="20.3" stroke="#4a2e10" stroke-width="7.5"/><line x1="313.9" y1="60.9" x2="340.9" y2="20.3" stroke="#dcc08a" stroke-width="3.6"/><circle cx="339.7" cy="22.1" r="2.6" fill="#8a6230"/><line x1="340.5" y1="90.0" x2="379.5" y2="62.8" stroke="#4a2e10" stroke-width="7.5"/><line x1="340.5" y1="90.0" x2="379.5" y2="62.8" stroke="#dcc08a" stroke-width="3.6"/><circle cx="377.8" cy="63.9" r="2.6" fill="#8a6230"/><line x1="353.8" y1="127.1" x2="398.9" y2="116.7" stroke="#4a2e10" stroke-width="7.5"/><line x1="353.8" y1="127.1" x2="398.9" y2="116.7" stroke="#dcc08a" stroke-width="3.6"/><circle cx="396.9" cy="117.2" r="2.6" fill="#8a6230"/><line x1="352.0" y1="166.4" x2="396.2" y2="174.0" stroke="#4a2e10" stroke-width="7.5"/><line x1="352.0" y1="166.4" x2="396.2" y2="174.0" stroke="#dcc08a" stroke-width="3.6"/><circle cx="394.3" cy="173.7" r="2.6" fill="#8a6230"/><line x1="335.2" y1="202.1" x2="371.8" y2="225.9" stroke="#4a2e10" stroke-width="7.5"/><line x1="335.2" y1="202.1" x2="371.8" y2="225.9" stroke="#dcc08a" stroke-width="3.6"/><circle cx="370.2" cy="224.9" r="2.6" fill="#8a6230"/><line x1="306.0" y1="228.6" x2="329.4" y2="264.5" stroke="#4a2e10" stroke-width="7.5"/><line x1="306.0" y1="228.6" x2="329.4" y2="264.5" stroke="#dcc08a" stroke-width="3.6"/><circle cx="328.3" cy="263.0" r="2.6" fill="#8a6230"/><line x1="269.0" y1="242.0" x2="275.4" y2="283.9" stroke="#4a2e10" stroke-width="7.5"/><line x1="269.0" y1="242.0" x2="275.4" y2="283.9" stroke="#dcc08a" stroke-width="3.6"/><circle cx="275.1" cy="282.1" r="2.6" fill="#8a6230"/><line x1="229.6" y1="240.1" x2="218.1" y2="281.2" stroke="#4a2e10" stroke-width="7.5"/><line x1="229.6" y1="240.1" x2="218.1" y2="281.2" stroke="#dcc08a" stroke-width="3.6"/><circle cx="218.6" cy="279.5" r="2.6" fill="#8a6230"/><line x1="193.9" y1="223.3" x2="166.2" y2="256.8" stroke="#4a2e10" stroke-width="7.5"/><line x1="193.9" y1="223.3" x2="166.2" y2="256.8" stroke="#dcc08a" stroke-width="3.6"/><circle cx="167.4" cy="255.4" r="2.6" fill="#8a6230"/><line x1="167.4" y1="194.2" x2="127.6" y2="214.4" stroke="#4a2e10" stroke-width="7.5"/><line x1="167.4" y1="194.2" x2="127.6" y2="214.4" stroke="#dcc08a" stroke-width="3.6"/><circle cx="129.3" cy="213.5" r="2.6" fill="#8a6230"/><line x1="154.1" y1="157.1" x2="108.2" y2="160.4" stroke="#4a2e10" stroke-width="7.5"/><line x1="154.1" y1="157.1" x2="108.2" y2="160.4" stroke="#dcc08a" stroke-width="3.6"/><circle cx="110.2" cy="160.3" r="2.6" fill="#8a6230"/><line x1="155.9" y1="117.7" x2="110.9" y2="103.1" stroke="#4a2e10" stroke-width="7.5"/><line x1="155.9" y1="117.7" x2="110.9" y2="103.1" stroke="#dcc08a" stroke-width="3.6"/><circle cx="112.8" cy="103.8" r="2.6" fill="#8a6230"/><line x1="172.7" y1="82.1" x2="135.3" y2="51.2" stroke="#4a2e10" stroke-width="7.5"/><line x1="172.7" y1="82.1" x2="135.3" y2="51.2" stroke="#dcc08a" stroke-width="3.6"/><circle cx="136.9" cy="52.6" r="2.6" fill="#8a6230"/><line x1="201.8" y1="55.6" x2="177.7" y2="12.6" stroke="#4a2e10" stroke-width="7.5"/><line x1="201.8" y1="55.6" x2="177.7" y2="12.6" stroke="#dcc08a" stroke-width="3.6"/><circle cx="178.8" cy="14.5" r="2.6" fill="#8a6230"/><line x1="238.9" y1="42.2" x2="231.7" y2="-6.8" stroke="#4a2e10" stroke-width="7.5"/><line x1="238.9" y1="42.2" x2="231.7" y2="-6.8" stroke="#dcc08a" stroke-width="3.6"/><circle cx="232.0" cy="-4.7" r="2.6" fill="#8a6230"/><circle cx="253.9" cy="142.1" r="101.5" fill="none" stroke="#6a4a22" stroke-width="2"/><circle cx="259.9" cy="7.9" r="13.5" fill="#d2a862"/><circle cx="259.9" cy="7.9" r="11.8" fill="#7a4e1c"/><polygon points="269.1,11.7 263.7,17.1 256.1,17.1 250.7,11.7 250.7,4.0 256.1,-1.4 263.7,-1.4 269.1,4.0" fill="#f7f1e6" stroke="#24160a" stroke-width="1.8"/><circle cx="259.9" cy="7.9" r="4.6" fill="#d8c09a"/><circle cx="259.9" cy="7.9" r="2.6" fill="#5a3a18"/><circle cx="309.9" cy="20.3" r="13.5" fill="#d2a862"/><circle cx="309.9" cy="20.3" r="11.8" fill="#7a4e1c"/><polygon points="319.1,24.1 313.7,29.5 306.0,29.5 300.6,24.1 300.6,16.5 306.0,11.1 313.7,11.1 319.1,16.5" fill="#f7f1e6" stroke="#24160a" stroke-width="1.8"/><circle cx="309.9" cy="20.3" r="4.6" fill="#d8c09a"/><circle cx="309.9" cy="20.3" r="2.6" fill="#5a3a18"/><circle cx="351.3" cy="50.9" r="13.5" fill="#d2a862"/><circle cx="351.3" cy="50.9" r="11.8" fill="#7a4e1c"/><polygon points="360.5,54.7 355.1,60.1 347.5,60.1 342.1,54.7 342.1,47.1 347.5,41.6 355.1,41.6 360.5,47.1" fill="#f7f1e6" stroke="#24160a" stroke-width="1.8"/><circle cx="351.3" cy="50.9" r="4.6" fill="#d8c09a"/><circle cx="351.3" cy="50.9" r="2.6" fill="#5a3a18"/><circle cx="377.9" cy="95.0" r="13.5" fill="#d2a862"/><circle cx="377.9" cy="95.0" r="11.8" fill="#7a4e1c"/><polygon points="387.1,98.8 381.7,104.3 374.0,104.3 368.6,98.8 368.6,91.2 374.0,85.8 381.7,85.8 387.1,91.2" fill="#f7f1e6" stroke="#24160a" stroke-width="1.8"/><circle cx="377.9" cy="95.0" r="4.6" fill="#d8c09a"/><circle cx="377.9" cy="95.0" r="2.6" fill="#5a3a18"/><circle cx="385.5" cy="145.9" r="13.5" fill="#d2a862"/><circle cx="385.5" cy="145.9" r="11.8" fill="#7a4e1c"/><polygon points="394.8,149.8 389.4,155.2 381.7,155.2 376.3,149.8 376.3,142.1 381.7,136.7 389.4,136.7 394.8,142.1" fill="#f7f1e6" stroke="#24160a" stroke-width="1.8"/><circle cx="385.5" cy="145.9" r="4.6" fill="#d8c09a"/><circle cx="385.5" cy="145.9" r="2.6" fill="#5a3a18"/><circle cx="373.1" cy="195.9" r="13.5" fill="#d2a862"/><circle cx="373.1" cy="195.9" r="11.8" fill="#7a4e1c"/><polygon points="382.3,199.8 376.9,205.2 369.3,205.2 363.9,199.8 363.9,192.1 369.3,186.7 376.9,186.7 382.3,192.1" fill="#f7f1e6" stroke="#24160a" stroke-width="1.8"/><circle cx="373.1" cy="195.9" r="4.6" fill="#d8c09a"/><circle cx="373.1" cy="195.9" r="2.6" fill="#5a3a18"/><circle cx="342.5" cy="237.4" r="13.5" fill="#d2a862"/><circle cx="342.5" cy="237.4" r="11.8" fill="#7a4e1c"/><polygon points="351.7,241.2 346.3,246.6 338.7,246.6 333.3,241.2 333.3,233.5 338.7,228.1 346.3,228.1 351.7,233.5" fill="#f7f1e6" stroke="#24160a" stroke-width="1.8"/><circle cx="342.5" cy="237.4" r="4.6" fill="#d8c09a"/><circle cx="342.5" cy="237.4" r="2.6" fill="#5a3a18"/><circle cx="298.4" cy="263.9" r="13.5" fill="#d2a862"/><circle cx="298.4" cy="263.9" r="11.8" fill="#7a4e1c"/><polygon points="307.6,267.7 302.2,273.2 294.6,273.2 289.1,267.7 289.1,260.1 294.6,254.7 302.2,254.7 307.6,260.1" fill="#f7f1e6" stroke="#24160a" stroke-width="1.8"/><circle cx="298.4" cy="263.9" r="4.6" fill="#d8c09a"/><circle cx="298.4" cy="263.9" r="2.6" fill="#5a3a18"/><circle cx="247.5" cy="271.6" r="13.5" fill="#d2a862"/><circle cx="247.5" cy="271.6" r="11.8" fill="#7a4e1c"/><polygon points="256.7,275.4 251.3,280.8 243.6,280.8 238.2,275.4 238.2,267.8 243.6,262.3 251.3,262.3 256.7,267.8" fill="#f7f1e6" stroke="#24160a" stroke-width="1.8"/><circle cx="247.5" cy="271.6" r="4.6" fill="#d8c09a"/><circle cx="247.5" cy="271.6" r="2.6" fill="#5a3a18"/><circle cx="197.5" cy="259.2" r="13.5" fill="#d2a862"/><circle cx="197.5" cy="259.2" r="11.8" fill="#7a4e1c"/><polygon points="206.7,263.0 201.3,268.4 193.6,268.4 188.2,263.0 188.2,255.3 193.6,249.9 201.3,249.9 206.7,255.3" fill="#f7f1e6" stroke="#24160a" stroke-width="1.8"/><circle cx="197.5" cy="259.2" r="4.6" fill="#d8c09a"/><circle cx="197.5" cy="259.2" r="2.6" fill="#5a3a18"/><circle cx="156.0" cy="228.6" r="13.5" fill="#d2a862"/><circle cx="156.0" cy="228.6" r="11.8" fill="#7a4e1c"/><polygon points="165.3,232.4 159.9,237.8 152.2,237.8 146.8,232.4 146.8,224.7 152.2,219.3 159.9,219.3 165.3,224.7" fill="#f7f1e6" stroke="#24160a" stroke-width="1.8"/><circle cx="156.0" cy="228.6" r="4.6" fill="#d8c09a"/><circle cx="156.0" cy="228.6" r="2.6" fill="#5a3a18"/><circle cx="129.5" cy="184.4" r="13.5" fill="#d2a862"/><circle cx="129.5" cy="184.4" r="11.8" fill="#7a4e1c"/><polygon points="138.7,188.3 133.3,193.7 125.6,193.7 120.2,188.3 120.2,180.6 125.6,175.2 133.3,175.2 138.7,180.6" fill="#f7f1e6" stroke="#24160a" stroke-width="1.8"/><circle cx="129.5" cy="184.4" r="4.6" fill="#d8c09a"/><circle cx="129.5" cy="184.4" r="2.6" fill="#5a3a18"/><circle cx="121.8" cy="133.5" r="13.5" fill="#d2a862"/><circle cx="121.8" cy="133.5" r="11.8" fill="#7a4e1c"/><polygon points="131.1,137.3 125.6,142.7 118.0,142.7 112.6,137.3 112.6,129.7 118.0,124.3 125.6,124.3 131.1,129.7" fill="#f7f1e6" stroke="#24160a" stroke-width="1.8"/><circle cx="121.8" cy="133.5" r="4.6" fill="#d8c09a"/><circle cx="121.8" cy="133.5" r="2.6" fill="#5a3a18"/><circle cx="134.2" cy="83.5" r="13.5" fill="#d2a862"/><circle cx="134.2" cy="83.5" r="11.8" fill="#7a4e1c"/><polygon points="143.5,87.4 138.1,92.8 130.4,92.8 125.0,87.4 125.0,79.7 130.4,74.3 138.1,74.3 143.5,79.7" fill="#f7f1e6" stroke="#24160a" stroke-width="1.8"/><circle cx="134.2" cy="83.5" r="4.6" fill="#d8c09a"/><circle cx="134.2" cy="83.5" r="2.6" fill="#5a3a18"/><circle cx="164.8" cy="42.1" r="13.5" fill="#d2a862"/><circle cx="164.8" cy="42.1" r="11.8" fill="#7a4e1c"/><polygon points="174.1,45.9 168.7,51.3 161.0,51.3 155.6,45.9 155.6,38.3 161.0,32.9 168.7,32.9 174.1,38.3" fill="#f7f1e6" stroke="#24160a" stroke-width="1.8"/><circle cx="164.8" cy="42.1" r="4.6" fill="#d8c09a"/><circle cx="164.8" cy="42.1" r="2.6" fill="#5a3a18"/><circle cx="209.0" cy="15.5" r="13.5" fill="#d2a862"/><circle cx="209.0" cy="15.5" r="11.8" fill="#7a4e1c"/><polygon points="218.2,19.4 212.8,24.8 205.1,24.8 199.7,19.4 199.7,11.7 205.1,6.3 212.8,6.3 218.2,11.7" fill="#f7f1e6" stroke="#24160a" stroke-width="1.8"/><circle cx="209.0" cy="15.5" r="4.6" fill="#d8c09a"/><circle cx="209.0" cy="15.5" r="2.6" fill="#5a3a18"/><circle cx="254.0" cy="142.3" r="100.5" fill="url(#bandtex)"/><ellipse cx="258.5" cy="45.5" rx="8" ry="5" transform="rotate(2.7 258.5 45.5)" fill="#f0dcb0"/><ellipse cx="295.3" cy="54.6" rx="8" ry="5" transform="rotate(25.2 295.3 54.6)" fill="#f0dcb0"/><ellipse cx="325.7" cy="77.1" rx="8" ry="5" transform="rotate(47.7 325.7 77.1)" fill="#f0dcb0"/><ellipse cx="345.2" cy="109.5" rx="8" ry="5" transform="rotate(70.2 345.2 109.5)" fill="#f0dcb0"/><ellipse cx="350.9" cy="147.0" rx="8" ry="5" transform="rotate(92.7 350.9 147.0)" fill="#f0dcb0"/><ellipse cx="341.7" cy="183.7" rx="8" ry="5" transform="rotate(115.2 341.7 183.7)" fill="#f0dcb0"/><ellipse cx="319.3" cy="214.1" rx="8" ry="5" transform="rotate(137.7 319.3 214.1)" fill="#f0dcb0"/><ellipse cx="286.8" cy="233.7" rx="8" ry="5" transform="rotate(160.2 286.8 233.7)" fill="#f0dcb0"/><ellipse cx="249.4" cy="239.3" rx="8" ry="5" transform="rotate(182.7 249.4 239.3)" fill="#f0dcb0"/><ellipse cx="212.7" cy="230.2" rx="8" ry="5" transform="rotate(205.2 212.7 230.2)" fill="#f0dcb0"/><ellipse cx="182.2" cy="207.7" rx="8" ry="5" transform="rotate(227.7 182.2 207.7)" fill="#f0dcb0"/><ellipse cx="162.7" cy="175.3" rx="8" ry="5" transform="rotate(250.2 162.7 175.3)" fill="#f0dcb0"/><ellipse cx="157.1" cy="137.8" rx="8" ry="5" transform="rotate(272.7 157.1 137.8)" fill="#f0dcb0"/><ellipse cx="166.2" cy="101.1" rx="8" ry="5" transform="rotate(295.2 166.2 101.1)" fill="#f0dcb0"/><ellipse cx="188.7" cy="70.7" rx="8" ry="5" transform="rotate(317.7 188.7 70.7)" fill="#f0dcb0"/><ellipse cx="221.1" cy="51.1" rx="8" ry="5" transform="rotate(340.2 221.1 51.1)" fill="#f0dcb0"/><circle cx="254.0" cy="142.8" r="90" fill="url(#bandtex)"/><circle cx="254.1" cy="143.2" r="86" fill="url(#dome)"/><circle cx="254.1" cy="143.2" r="86" fill="url(#dometex)"/><circle cx="254.1" cy="143.2" r="87" fill="none" stroke="#7c5322" stroke-width="3.5"/><polygon points="273.4,66.1 266.0,46.2 288.3,51.7" fill="#ead2a0"/><polygon points="301.6,79.3 302.0,58.1 320.4,71.7" fill="#ead2a0"/><polygon points="322.7,102.4 330.6,82.9 342.4,102.6" fill="#ead2a0"/><polygon points="333.2,131.8 347.5,116.7 350.9,139.4" fill="#ead2a0"/><polygon points="331.8,163.0 350.2,154.5 344.7,176.8" fill="#ead2a0"/><polygon points="318.5,191.2 338.3,190.4 324.6,208.9" fill="#ead2a0"/><polygon points="295.4,212.2 313.5,219.0 293.8,230.8" fill="#ead2a0"/><polygon points="266.0,222.8 279.6,235.9 256.9,239.4" fill="#ead2a0"/><polygon points="234.8,221.3 241.9,238.6 219.6,233.1" fill="#ead2a0"/><polygon points="206.6,208.0 206.0,226.7 187.5,213.0" fill="#ead2a0"/><polygon points="185.6,185.0 177.4,201.9 165.5,182.2" fill="#ead2a0"/><polygon points="175.0,155.6 160.4,168.1 157.0,145.4" fill="#ead2a0"/><polygon points="176.5,124.4 157.7,130.3 163.3,108.0" fill="#ead2a0"/><polygon points="189.8,96.2 169.7,94.4 183.3,75.9" fill="#ead2a0"/><polygon points="212.9,75.2 194.5,65.8 214.1,54.0" fill="#ead2a0"/><polygon points="242.2,64.6 228.3,48.9 251.0,45.4" fill="#ead2a0"/><circle cx="254.3" cy="145.3" r="59" fill="none" stroke="#7a5630" stroke-width="1.3"/><circle cx="254.5" cy="147.0" r="37" fill="none" stroke="#a7865a" stroke-width="0.7"/><circle cx="254.4" cy="146.4" r="45" fill="none" stroke="#a7865a" stroke-width="0.7"/><circle cx="254.4" cy="145.8" r="52" fill="none" stroke="#a7865a" stroke-width="0.7"/><circle cx="254.2" cy="144.8" r="66" fill="none" stroke="#ad8c60" stroke-width="0.6"/><circle cx="254.2" cy="144.2" r="74" fill="none" stroke="#ad8c60" stroke-width="0.6"/><circle cx="254.1" cy="143.6" r="81" fill="none" stroke="#ad8c60" stroke-width="0.6"/><circle cx="254.6" cy="147.7" r="28.5" fill="#c89c5c" stroke="#6e4e2a" stroke-width="1.3"/><line x1="283.6" y1="147.6" x2="313.3" y2="145.3" stroke="#7e5c34" stroke-width="1.1"/><line x1="282.6" y1="155.1" x2="311.3" y2="160.6" stroke="#7e5c34" stroke-width="1.1"/><line x1="279.7" y1="162.1" x2="305.4" y2="174.8" stroke="#7e5c34" stroke-width="1.1"/><line x1="275.1" y1="168.1" x2="296.0" y2="187.0" stroke="#7e5c34" stroke-width="1.1"/><line x1="269.1" y1="172.7" x2="283.8" y2="196.4" stroke="#7e5c34" stroke-width="1.1"/><line x1="262.1" y1="175.6" x2="269.6" y2="202.3" stroke="#7e5c34" stroke-width="1.1"/><line x1="254.6" y1="176.6" x2="254.3" y2="204.3" stroke="#7e5c34" stroke-width="1.1"/><line x1="247.0" y1="175.6" x2="239.0" y2="202.3" stroke="#7e5c34" stroke-width="1.1"/><line x1="240.1" y1="172.7" x2="224.8" y2="196.4" stroke="#7e5c34" stroke-width="1.1"/><line x1="234.0" y1="168.1" x2="212.6" y2="187.0" stroke="#7e5c34" stroke-width="1.1"/><line x1="229.4" y1="162.1" x2="203.2" y2="174.8" stroke="#7e5c34" stroke-width="1.1"/><line x1="226.5" y1="155.1" x2="197.3" y2="160.6" stroke="#7e5c34" stroke-width="1.1"/><line x1="225.6" y1="147.6" x2="195.3" y2="145.3" stroke="#7e5c34" stroke-width="1.1"/><line x1="226.5" y1="140.1" x2="197.3" y2="130.0" stroke="#7e5c34" stroke-width="1.1"/><line x1="229.4" y1="133.1" x2="203.2" y2="115.8" stroke="#7e5c34" stroke-width="1.1"/><line x1="234.0" y1="127.1" x2="212.6" y2="103.6" stroke="#7e5c34" stroke-width="1.1"/><line x1="240.1" y1="122.5" x2="224.8" y2="94.2" stroke="#7e5c34" stroke-width="1.1"/><line x1="247.0" y1="119.6" x2="239.0" y2="88.3" stroke="#7e5c34" stroke-width="1.1"/><line x1="254.6" y1="118.6" x2="254.3" y2="86.3" stroke="#7e5c34" stroke-width="1.1"/><line x1="262.1" y1="119.6" x2="269.6" y2="88.3" stroke="#7e5c34" stroke-width="1.1"/><line x1="269.1" y1="122.5" x2="283.8" y2="94.2" stroke="#7e5c34" stroke-width="1.1"/><line x1="275.1" y1="127.1" x2="296.0" y2="103.6" stroke="#7e5c34" stroke-width="1.1"/><line x1="279.7" y1="133.1" x2="305.4" y2="115.8" stroke="#7e5c34" stroke-width="1.1"/><line x1="282.6" y1="140.1" x2="311.3" y2="130.0" stroke="#7e5c34" stroke-width="1.1"/><line x1="314.1" y1="150.5" x2="339.7" y2="150.7" stroke="#9a7a50" stroke-width="0.8"/><line x1="311.9" y1="162.0" x2="336.6" y2="167.3" stroke="#9a7a50" stroke-width="0.8"/><line x1="307.5" y1="172.9" x2="330.3" y2="182.9" stroke="#9a7a50" stroke-width="0.8"/><line x1="301.1" y1="182.8" x2="321.1" y2="197.1" stroke="#9a7a50" stroke-width="0.8"/><line x1="292.9" y1="191.2" x2="309.3" y2="209.1" stroke="#9a7a50" stroke-width="0.8"/><line x1="283.1" y1="197.8" x2="295.4" y2="218.6" stroke="#9a7a50" stroke-width="0.8"/><line x1="272.3" y1="202.4" x2="279.9" y2="225.3" stroke="#9a7a50" stroke-width="0.8"/><line x1="260.8" y1="204.9" x2="263.4" y2="228.7" stroke="#9a7a50" stroke-width="0.8"/><line x1="249.1" y1="205.0" x2="246.6" y2="228.9" stroke="#9a7a50" stroke-width="0.8"/><line x1="237.5" y1="202.8" x2="230.0" y2="225.8" stroke="#9a7a50" stroke-width="0.8"/><line x1="226.6" y1="198.4" x2="214.4" y2="219.5" stroke="#9a7a50" stroke-width="0.8"/><line x1="216.7" y1="192.0" x2="200.2" y2="210.3" stroke="#9a7a50" stroke-width="0.8"/><line x1="208.3" y1="183.8" x2="188.2" y2="198.5" stroke="#9a7a50" stroke-width="0.8"/><line x1="201.7" y1="174.1" x2="178.7" y2="184.6" stroke="#9a7a50" stroke-width="0.8"/><line x1="197.1" y1="163.3" x2="172.0" y2="169.1" stroke="#9a7a50" stroke-width="0.8"/><line x1="194.6" y1="151.8" x2="168.6" y2="152.6" stroke="#9a7a50" stroke-width="0.8"/><line x1="194.5" y1="140.0" x2="168.4" y2="135.7" stroke="#9a7a50" stroke-width="0.8"/><line x1="196.7" y1="128.4" x2="171.5" y2="119.2" stroke="#9a7a50" stroke-width="0.8"/><line x1="201.1" y1="117.5" x2="177.8" y2="103.5" stroke="#9a7a50" stroke-width="0.8"/><line x1="207.5" y1="107.7" x2="187.0" y2="89.4" stroke="#9a7a50" stroke-width="0.8"/><line x1="215.7" y1="99.3" x2="198.8" y2="77.4" stroke="#9a7a50" stroke-width="0.8"/><line x1="225.4" y1="92.6" x2="212.7" y2="67.8" stroke="#9a7a50" stroke-width="0.8"/><line x1="236.2" y1="88.0" x2="228.2" y2="61.2" stroke="#9a7a50" stroke-width="0.8"/><line x1="247.8" y1="85.6" x2="244.7" y2="57.7" stroke="#9a7a50" stroke-width="0.8"/><line x1="259.5" y1="85.4" x2="261.6" y2="57.6" stroke="#9a7a50" stroke-width="0.8"/><line x1="271.1" y1="87.6" x2="278.1" y2="60.7" stroke="#9a7a50" stroke-width="0.8"/><line x1="282.0" y1="92.0" x2="293.8" y2="67.0" stroke="#9a7a50" stroke-width="0.8"/><line x1="291.8" y1="98.4" x2="307.9" y2="76.2" stroke="#9a7a50" stroke-width="0.8"/><line x1="300.2" y1="106.7" x2="319.9" y2="88.0" stroke="#9a7a50" stroke-width="0.8"/><line x1="306.9" y1="116.4" x2="329.5" y2="101.9" stroke="#9a7a50" stroke-width="0.8"/><line x1="311.5" y1="127.2" x2="336.1" y2="117.4" stroke="#9a7a50" stroke-width="0.8"/><line x1="313.9" y1="138.7" x2="339.6" y2="133.9" stroke="#9a7a50" stroke-width="0.8"/><polyline points="282.6,147.7 267.6,154.1 274.4,167.5" fill="none" stroke="#9a7a50" stroke-width="0.7"/><polyline points="274.4,167.5 260.0,161.7 254.6,175.7" fill="none" stroke="#9a7a50" stroke-width="0.7"/><polyline points="254.6,175.7 249.3,161.7 234.8,167.5" fill="none" stroke="#9a7a50" stroke-width="0.7"/><polyline points="234.8,167.5 241.7,154.1 226.6,147.7" fill="none" stroke="#9a7a50" stroke-width="0.7"/><polyline points="226.6,147.7 241.7,143.4 234.8,127.9" fill="none" stroke="#9a7a50" stroke-width="0.7"/><polyline points="234.8,127.9 249.3,135.8 254.6,119.7" fill="none" stroke="#9a7a50" stroke-width="0.7"/><polyline points="254.6,119.7 260.0,135.8 274.4,127.9" fill="none" stroke="#9a7a50" stroke-width="0.7"/><polyline points="274.4,127.9 267.6,143.4 282.6,147.7" fill="none" stroke="#9a7a50" stroke-width="0.7"/><circle cx="317.6" cy="98.2" r="2.8" fill="url(#spark)"/><circle cx="148.6" cy="141.8" r="1.6" fill="url(#spark)"/><circle cx="218.0" cy="125.8" r="1.6" fill="url(#spark)"/><circle cx="331.1" cy="140.7" r="2.8" fill="url(#spark)"/><circle cx="242.4" cy="20.0" r="2.8" fill="url(#spark)"/><circle cx="325.0" cy="184.7" r="1.6" fill="url(#spark)"/><circle cx="316.8" cy="153.8" r="1.6" fill="url(#spark)"/><circle cx="321.2" cy="107.4" r="2.4" fill="url(#spark)"/><circle cx="328.5" cy="234.8" r="2.0" fill="url(#spark)"/><circle cx="226.0" cy="189.0" r="2.8" fill="url(#spark)"/><circle cx="198.8" cy="182.4" r="2.4" fill="url(#spark)"/><circle cx="278.9" cy="76.9" r="2.0" fill="url(#spark)"/><circle cx="149.0" cy="80.3" r="2.4" fill="url(#spark)"/><circle cx="216.2" cy="196.8" r="1.6" fill="url(#spark)"/><circle cx="229.1" cy="282.4" r="2.0" fill="url(#spark)"/><circle cx="319.2" cy="111.5" r="2.8" fill="url(#spark)"/><circle cx="219.4" cy="78.8" r="2.8" fill="url(#spark)"/><circle cx="239.7" cy="224.0" r="1.6" fill="url(#spark)"/><circle cx="230.5" cy="178.0" r="1.6" fill="url(#spark)"/><circle cx="270.1" cy="186.1" r="2.4" fill="url(#spark)"/><circle cx="316.0" cy="163.6" r="1.6" fill="url(#spark)"/><circle cx="211.0" cy="80.5" r="2.4" fill="url(#spark)"/><circle cx="295.6" cy="266.9" r="2.8" fill="url(#spark)"/><circle cx="256.6" cy="65.0" r="1.6" fill="url(#spark)"/><circle cx="215.8" cy="200.5" r="2.0" fill="url(#spark)"/><circle cx="321.3" cy="98.7" r="1.6" fill="url(#spark)"/><circle cx="190.6" cy="197.4" r="2.8" fill="url(#spark)"/><circle cx="318.8" cy="102.9" r="2.8" fill="url(#spark)"/><circle cx="205.4" cy="145.2" r="2.4" fill="url(#spark)"/><circle cx="275.7" cy="218.1" r="1.6" fill="url(#spark)"/><circle cx="337.0" cy="133.2" r="2.4" fill="url(#spark)"/><circle cx="231.9" cy="193.3" r="1.6" fill="url(#spark)"/><circle cx="195.5" cy="167.9" r="2.8" fill="url(#spark)"/><circle cx="377.2" cy="162.5" r="1.6" fill="url(#spark)"/><circle cx="193.7" cy="132.3" r="2.0" fill="url(#spark)"/><circle cx="323.8" cy="92.9" r="2.8" fill="url(#spark)"/><circle cx="373.0" cy="100.7" r="1.6" fill="url(#spark)"/><circle cx="138.7" cy="95.9" r="2.0" fill="url(#spark)"/><circle cx="204.2" cy="125.8" r="2.4" fill="url(#spark)"/><circle cx="293.2" cy="104.1" r="2.0" fill="url(#spark)"/><circle cx="192.2" cy="127.0" r="2.4" fill="url(#spark)"/><circle cx="218.2" cy="138.6" r="1.6" fill="url(#spark)"/><circle cx="286.6" cy="141.1" r="2.8" fill="url(#spark)"/><circle cx="295.9" cy="185.4" r="1.6" fill="url(#spark)"/><circle cx="150.1" cy="115.9" r="2.8" fill="url(#spark)"/><circle cx="138.9" cy="218.0" r="2.0" fill="url(#spark)"/><circle cx="195.6" cy="170.9" r="2.8" fill="url(#spark)"/><circle cx="224.0" cy="164.0" r="1.6" fill="url(#spark)"/><circle cx="273.9" cy="33.6" r="1.6" fill="url(#spark)"/><circle cx="319.0" cy="149.7" r="2.4" fill="url(#spark)"/><circle cx="203.2" cy="96.7" r="1.6" fill="url(#spark)"/><circle cx="299.3" cy="83.4" r="2.4" fill="url(#spark)"/><circle cx="351.2" cy="46.4" r="1.6" fill="url(#spark)"/><circle cx="184.1" cy="131.3" r="2.0" fill="url(#spark)"/><circle cx="201.1" cy="134.1" r="2.0" fill="url(#spark)"/><circle cx="213.0" cy="110.7" r="2.0" fill="url(#spark)"/><circle cx="283.6" cy="69.9" r="2.0" fill="url(#spark)"/><circle cx="315.1" cy="112.4" r="2.0" fill="url(#spark)"/><circle cx="346.2" cy="205.6" r="2.0" fill="url(#spark)"/><circle cx="206.1" cy="185.9" r="2.8" fill="url(#spark)"/><circle cx="284.2" cy="21.7" r="2.0" fill="url(#spark)"/><circle cx="277.3" cy="70.8" r="1.6" fill="url(#spark)"/><circle cx="320.4" cy="102.6" r="2.4" fill="url(#spark)"/><circle cx="257.9" cy="70.6" r="2.0" fill="url(#spark)"/><circle cx="377.5" cy="159.3" r="2.8" fill="url(#spark)"/><circle cx="273.0" cy="207.7" r="2.0" fill="url(#spark)"/><circle cx="373.2" cy="220.3" r="1.6" fill="url(#spark)"/><circle cx="323.1" cy="180.4" r="1.6" fill="url(#spark)"/><circle cx="181.8" cy="137.3" r="2.8" fill="url(#spark)"/><circle cx="207.4" cy="92.0" r="1.6" fill="url(#spark)"/><circle cx="146.5" cy="173.2" r="2.4" fill="url(#spark)"/><circle cx="287.7" cy="201.5" r="1.6" fill="url(#spark)"/><circle cx="288.7" cy="92.1" r="2.8" fill="url(#spark)"/><circle cx="222.6" cy="128.2" r="2.4" fill="url(#spark)"/><circle cx="351.7" cy="80.0" r="2.0" fill="url(#spark)"/><circle cx="350.8" cy="66.8" r="2.4" fill="url(#spark)"/><circle cx="139.4" cy="216.1" r="2.0" fill="url(#spark)"/><circle cx="186.0" cy="158.0" r="1.6" fill="url(#spark)"/><circle cx="374.4" cy="53.8" r="1.6" fill="url(#spark)"/><circle cx="211.5" cy="70.2" r="2.4" fill="url(#spark)"/><circle cx="283.7" cy="209.1" r="1.6" fill="url(#spark)"/><circle cx="200.2" cy="76.2" r="1.6" fill="url(#spark)"/><circle cx="399.2" cy="159.6" r="1.6" fill="url(#spark)"/><circle cx="159.9" cy="207.9" r="1.6" fill="url(#spark)"/><circle cx="385.9" cy="148.7" r="2.4" fill="url(#spark)"/><circle cx="174.5" cy="117.5" r="2.8" fill="url(#spark)"/><circle cx="382.6" cy="136.0" r="2.8" fill="url(#spark)"/><circle cx="166.1" cy="79.9" r="1.6" fill="url(#spark)"/><circle cx="190.4" cy="198.9" r="2.0" fill="url(#spark)"/><circle cx="148.7" cy="67.1" r="2.8" fill="url(#spark)"/><circle cx="133.0" cy="119.9" r="2.4" fill="url(#spark)"/><circle cx="216.0" cy="88.2" r="2.4" fill="url(#spark)"/><circle cx="305.1" cy="154.5" r="2.0" fill="url(#spark)"/><circle cx="213.7" cy="172.4" r="2.8" fill="url(#spark)"/><circle cx="199.1" cy="185.8" r="2.4" fill="url(#spark)"/><circle cx="178.5" cy="179.3" r="2.8" fill="url(#spark)"/><circle cx="330.8" cy="166.2" r="1.6" fill="url(#spark)"/><circle cx="120.5" cy="166.3" r="2.0" fill="url(#spark)"/><circle cx="229.6" cy="122.5" r="2.8" fill="url(#spark)"/><circle cx="202.8" cy="208.2" r="2.0" fill="url(#spark)"/><circle cx="218.6" cy="81.6" r="2.8" fill="url(#spark)"/><circle cx="234.2" cy="101.8" r="2.4" fill="url(#spark)"/><circle cx="381.1" cy="138.2" r="2.4" fill="url(#spark)"/><circle cx="340.2" cy="216.2" r="2.4" fill="url(#spark)"/><circle cx="170.4" cy="241.5" r="2.4" fill="url(#spark)"/><circle cx="238.4" cy="97.7" r="2.0" fill="url(#spark)"/><circle cx="273.4" cy="193.8" r="2.0" fill="url(#spark)"/><circle cx="270.7" cy="192.2" r="1.6" fill="url(#spark)"/><circle cx="252.6" cy="179.5" r="1.6" fill="url(#spark)"/><circle cx="221.0" cy="138.2" r="1.6" fill="url(#spark)"/><circle cx="330.2" cy="260.9" r="2.0" fill="url(#spark)"/><circle cx="213.1" cy="152.2" r="2.0" fill="url(#spark)"/><circle cx="303.3" cy="198.7" r="1.6" fill="url(#spark)"/><circle cx="307.8" cy="29.1" r="2.0" fill="url(#spark)"/><circle cx="192.7" cy="194.5" r="2.0" fill="url(#spark)"/><circle cx="331.3" cy="138.6" r="2.4" fill="url(#spark)"/><circle cx="290.9" cy="72.7" r="2.0" fill="url(#spark)"/><circle cx="311.8" cy="184.6" r="2.4" fill="url(#spark)"/><circle cx="196.3" cy="120.2" r="2.8" fill="url(#spark)"/><circle cx="309.2" cy="28.9" r="1.6" fill="url(#spark)"/><circle cx="219.4" cy="88.3" r="1.6" fill="url(#spark)"/><circle cx="264.9" cy="14.9" r="2.4" fill="url(#spark)"/><circle cx="213.8" cy="195.2" r="2.4" fill="url(#spark)"/><circle cx="238.1" cy="83.1" r="2.4" fill="url(#spark)"/><circle cx="226.8" cy="219.9" r="2.4" fill="url(#spark)"/><circle cx="243.3" cy="58.8" r="2.0" fill="url(#spark)"/><circle cx="334.9" cy="155.9" r="2.8" fill="url(#spark)"/><circle cx="250.7" cy="93.2" r="2.4" fill="url(#spark)"/><circle cx="319.7" cy="30.6" r="2.0" fill="url(#spark)"/><circle cx="312.7" cy="89.3" r="2.4" fill="url(#spark)"/><circle cx="360.2" cy="181.5" r="2.0" fill="url(#spark)"/><circle cx="221.1" cy="99.0" r="2.8" fill="url(#spark)"/><circle cx="271.8" cy="71.6" r="1.6" fill="url(#spark)"/><circle cx="307.7" cy="186.3" r="2.4" fill="url(#spark)"/><circle cx="301.7" cy="204.3" r="2.8" fill="url(#spark)"/><circle cx="260.6" cy="78.5" r="2.4" fill="url(#spark)"/><circle cx="190.2" cy="243.9" r="2.4" fill="url(#spark)"/><circle cx="210.8" cy="136.0" r="1.6" fill="url(#spark)"/><circle cx="131.5" cy="215.6" r="2.4" fill="url(#spark)"/><circle cx="323.7" cy="18.6" r="2.8" fill="url(#spark)"/><circle cx="123.0" cy="120.0" r="1.6" fill="url(#spark)"/><circle cx="146.2" cy="199.2" r="2.0" fill="url(#spark)"/><circle cx="211.3" cy="96.0" r="2.0" fill="url(#spark)"/><circle cx="184.6" cy="131.6" r="2.4" fill="url(#spark)"/><circle cx="215.6" cy="241.2" r="1.6" fill="url(#spark)"/><circle cx="311.1" cy="113.5" r="1.6" fill="url(#spark)"/><circle cx="149.9" cy="154.2" r="1.6" fill="url(#spark)"/><circle cx="212.4" cy="195.8" r="2.0" fill="url(#spark)"/><circle cx="210.2" cy="144.0" r="2.8" fill="url(#spark)"/><circle cx="286.0" cy="204.7" r="2.4" fill="url(#spark)"/><circle cx="200.6" cy="127.9" r="2.4" fill="url(#spark)"/><circle cx="322.5" cy="124.8" r="1.6" fill="url(#spark)"/><circle cx="317.5" cy="165.2" r="2.0" fill="url(#spark)"/><circle cx="134.6" cy="119.7" r="2.4" fill="url(#spark)"/><circle cx="348.6" cy="92.9" r="1.6" fill="url(#spark)"/><circle cx="116.8" cy="183.3" r="2.0" fill="url(#spark)"/><circle cx="325.6" cy="248.9" r="2.0" fill="url(#spark)"/><circle cx="346.3" cy="81.1" r="2.0" fill="url(#spark)"/><circle cx="248.3" cy="202.9" r="1.6" fill="url(#spark)"/><circle cx="334.4" cy="144.4" r="2.0" fill="url(#spark)"/><circle cx="240.4" cy="248.4" r="1.6" fill="url(#spark)"/><circle cx="370.3" cy="206.4" r="2.4" fill="url(#spark)"/><circle cx="277.2" cy="206.3" r="1.6" fill="url(#spark)"/><circle cx="373.8" cy="169.0" r="2.8" fill="url(#spark)"/><circle cx="272.3" cy="115.6" r="2.4" fill="url(#spark)"/><circle cx="187.5" cy="119.7" r="2.8" fill="url(#spark)"/><circle cx="284.6" cy="162.4" r="2.0" fill="url(#spark)"/><circle cx="185.4" cy="161.3" r="1.6" fill="url(#spark)"/><circle cx="231.4" cy="169.9" r="2.8" fill="url(#spark)"/><circle cx="181.6" cy="163.6" r="1.6" fill="url(#spark)"/><circle cx="226.5" cy="0.5" r="2.0" fill="url(#spark)"/><circle cx="186.0" cy="127.0" r="2.4" fill="url(#spark)"/><circle cx="124.7" cy="92.4" r="1.6" fill="url(#spark)"/><circle cx="246.6" cy="79.2" r="2.4" fill="url(#spark)"/><circle cx="187.6" cy="157.4" r="2.4" fill="url(#spark)"/><circle cx="310.8" cy="186.6" r="1.6" fill="url(#spark)"/><circle cx="287.2" cy="213.2" r="2.0" fill="url(#spark)"/><circle cx="185.7" cy="98.5" r="1.6" fill="url(#spark)"/><circle cx="315.9" cy="140.2" r="2.8" fill="url(#spark)"/><circle cx="309.4" cy="115.0" r="2.8" fill="url(#spark)"/><circle cx="284.3" cy="247.2" r="2.0" fill="url(#spark)"/><circle cx="194.5" cy="246.1" r="2.8" fill="url(#spark)"/><circle cx="215.8" cy="112.7" r="2.4" fill="url(#spark)"/><circle cx="179.4" cy="22.0" r="1.6" fill="url(#spark)"/><circle cx="231.3" cy="206.4" r="2.8" fill="url(#spark)"/><circle cx="183.9" cy="140.3" r="2.4" fill="url(#spark)"/><circle cx="325.0" cy="249.6" r="2.4" fill="url(#spark)"/><circle cx="213.3" cy="146.6" r="2.0" fill="url(#spark)"/><circle cx="288.4" cy="131.9" r="2.0" fill="url(#spark)"/><circle cx="236.9" cy="119.8" r="1.6" fill="url(#spark)"/><polygon points="268.2,155.3 260.3,163.2 249.3,163.2 241.4,155.3 241.4,144.3 249.3,136.4 260.3,136.4 268.2,144.3" fill="#5e2e1e" stroke="#3a1a10" stroke-width="1"/><polygon points="265.8,149.8 259.0,151.5 262.6,157.6 256.5,154.0 254.8,160.8 253.1,154.0 247.0,157.6 250.6,151.5 243.8,149.8 250.6,148.1 247.0,142.0 253.1,145.6 254.8,138.8 256.5,145.6 262.6,142.0 259.0,148.1" fill="#efe0c6"/><circle cx="254.8" cy="149.8" r="3" fill="#d8c09a"/></g></svg>
<svg style="left:545px;top:496px" width="525" height="214" viewBox="0 0 525 214"><use href="#chand"/></svg>
<div class="t" style="left:7.00px;top:721.04px;font-size:12px;transform:scaleX(0.8600);">316 images in list | 1.23 GB</div>
</body></html>
